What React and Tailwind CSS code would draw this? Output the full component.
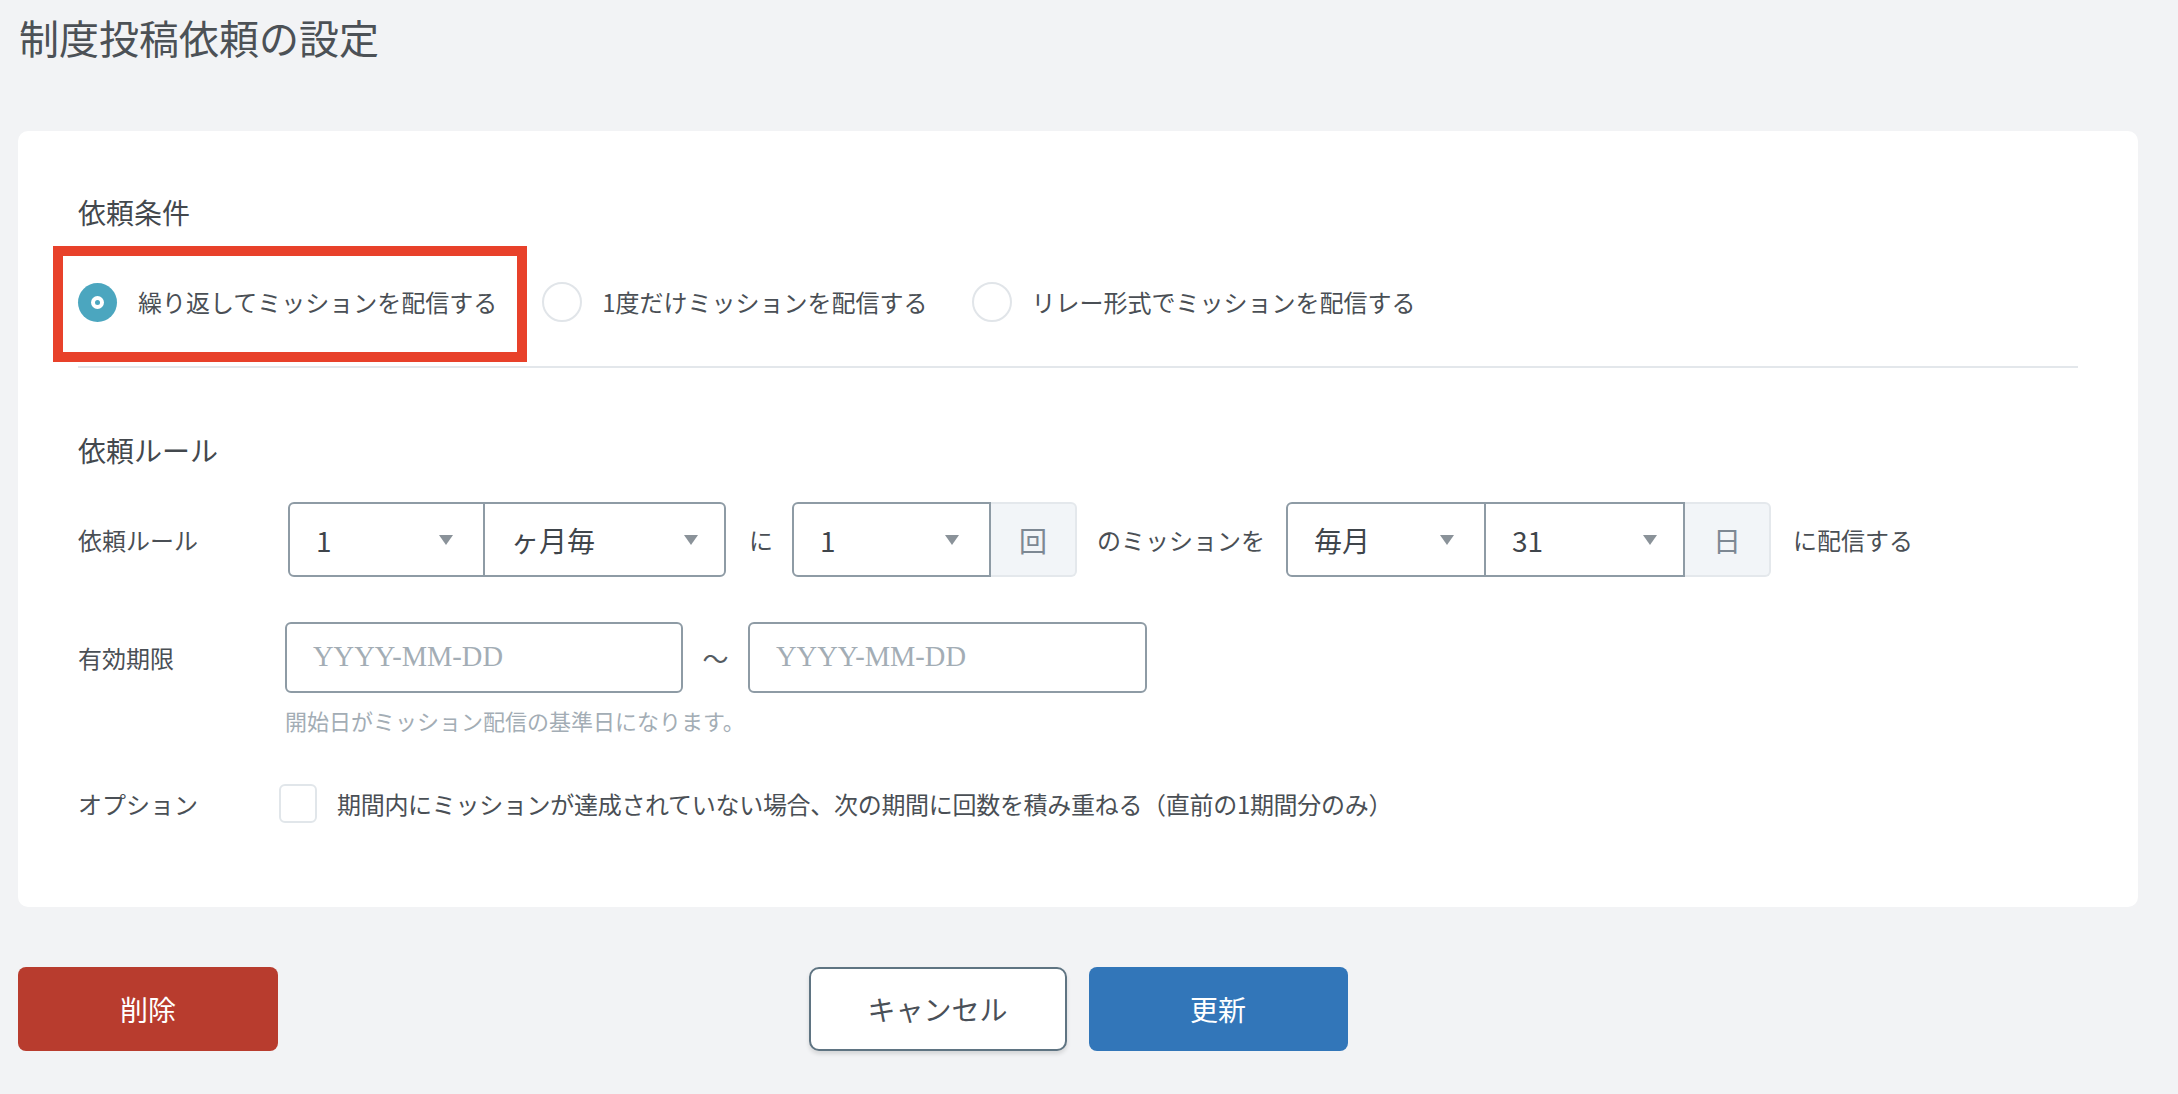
import React from "react";

const F = { fontFamily: '"Noto Sans CJK JP", "Noto Sans", sans-serif' };

function Arrow() {
  return (
    <svg width="14" height="10" viewBox="0 0 14 10" className="shrink-0">
      <path d="M0 0 L14 0 L7 10 Z" fill="#8a9299" />
    </svg>
  );
}

function Sel({ value, w, pr = "pr-[30px]", border = "" }) {
  return (
    <div className={`flex items-center justify-between h-full pl-[26px] ${pr} ${border}`} style={{ width: w }}>
      <span className="text-[28px] text-[#3f454b] leading-none">{value}</span>
      <Arrow />
    </div>
  );
}

function Addon({ ch }) {
  return (
    <div className="w-[86px] h-[75px] flex items-center justify-center bg-[#f2f5f8] border-2 border-l-0 border-[#e4e8ec] rounded-r-[6px] text-[28px] text-[#7d8893]">
      {ch}
    </div>
  );
}

function Radio({ checked }) {
  if (checked)
    return (
      <div className="w-[39px] h-[39px] rounded-full bg-[#4ba6bf] flex items-center justify-center shrink-0">
        <div className="w-[13px] h-[13px] rounded-full bg-white flex items-center justify-center">
          <div className="w-[5px] h-[5px] rounded-full bg-[#4ba6bf]" />
        </div>
      </div>
    );
  return <div className="w-[40px] h-[40px] rounded-full border-2 border-[#e1e5e9] bg-white shrink-0" />;
}

export default function App() {
  return (
    <div className="w-[2178px] h-[1094px] bg-[#f2f3f5] pl-[18px] pr-[40px] overflow-hidden text-[#4a4f55]" style={F}>
      <h1 className="pt-[11px] text-[40px] leading-[52px] text-[#4c5156] pl-[1px] font-normal">制度投稿依頼の設定</h1>

      <div className="relative mt-[68px] bg-white rounded-[10px] px-[60px] pt-[61px] pb-[84px]">
        <div className="absolute left-[35px] top-[115px] w-[474px] h-[116px] border-[10px] border-[#e8412a]" />

        <div className="text-[28px] leading-[40px] text-[#43484d]">依頼条件</div>

        <div className="mt-[50px] flex items-center h-[40px] text-[24px] text-[#4a4f55]">
          <Radio checked />
          <span className="ml-[21px]">繰り返してミッションを配信する</span>
          <div className="ml-[45px]"><Radio /></div>
          <span className="ml-[20px]">1度だけミッションを配信する</span>
          <div className="ml-[44px]"><Radio /></div>
          <span className="ml-[20px]">リレー形式でミッションを配信する</span>
        </div>

        <div className="mt-[44px] h-[2px] bg-[#e3e7eb]" />

        <div className="mt-[62px] text-[28px] leading-[40px] text-[#43484d]">依頼ルール</div>

        <div className="mt-[32px] flex items-center h-[75px] text-[24px]">
          <div className="w-[210px] shrink-0">依頼ルール</div>
          <div className="flex h-[75px] border-2 border-[#8e9ba5] rounded-[6px]">
            <Sel value="1" w={195} border="border-r-2 border-[#8e9ba5]" />
            <Sel value="ヶ月毎" w={239} pr="pr-[26px]" />
          </div>
          <span className="ml-[23px] mr-[19px]">に</span>
          <div className="flex">
            <div className="h-[75px] border-2 border-[#8e9ba5] rounded-l-[6px]">
              <Sel value="1" w={195} />
            </div>
            <Addon ch="回" />
          </div>
          <span className="ml-[20px] mr-[21px]">のミッションを</span>
          <div className="flex">
            <div className="flex h-[75px] border-2 border-[#8e9ba5] rounded-l-[6px]">
              <Sel value="毎月" w={198} border="border-r-2 border-[#8e9ba5]" />
              <Sel value="31" w={197} pr="pr-[26px]" />
            </div>
            <Addon ch="日" />
          </div>
          <span className="ml-[22px]">に配信する</span>
        </div>

        <div className="mt-[45px] flex items-center h-[71px] text-[24px]">
          <div className="w-[207px] shrink-0">有効期限</div>
          <div className="w-[398px] h-[71px] border-2 border-[#8e9ba5] rounded-[6px] flex items-center pl-[26px]">
            <span className="text-[28.5px] text-[#a3adb5]" style={{ fontFamily: '"Liberation Serif", serif' }}>YYYY-MM-DD</span>
          </div>
          <span className="w-[65px] text-center text-[26px] text-[#555b61]">〜</span>
          <div className="w-[399px] h-[71px] border-2 border-[#8e9ba5] rounded-[6px] flex items-center pl-[26px]">
            <span className="text-[28.5px] text-[#a3adb5]" style={{ fontFamily: '"Liberation Serif", serif' }}>YYYY-MM-DD</span>
          </div>
        </div>
        <div className="mt-[12px] ml-[207px] text-[22px] leading-[30px] text-[#a3adb5]">開始日がミッション配信の基準日になります。</div>

        <div className="mt-[49px] flex items-center h-[39px] text-[24px]">
          <div className="w-[201px] shrink-0">オプション</div>
          <div className="w-[38px] h-[39px] border-2 border-[#e1e6ea] rounded-[6px] shrink-0" />
          <span className="ml-[20px] tracking-[-0.3px]">期間内にミッションが達成されていない場合、次の期間に回数を積み重ねる（直前の1期間分のみ）</span>
        </div>
      </div>

      <div className="mt-[60px] grid grid-cols-[1fr_auto_1fr] items-center">
        <button className="justify-self-start w-[260px] h-[84px] rounded-[8px] bg-[#b83c2e] text-white text-[28px]" style={F}>削除</button>
        <div className="flex gap-[22px]">
          <button className="w-[258px] h-[84px] rounded-[10px] bg-white border-2 border-[#5f7482] text-[#4a5058] text-[28px] shadow-[0_3px_4px_rgba(0,0,0,0.12)]" style={F}>キャンセル</button>
          <button className="w-[259px] h-[84px] rounded-[8px] bg-[#3276b9] text-white text-[28px]" style={F}>更新</button>
        </div>
        <div />
      </div>
    </div>
  );
}
